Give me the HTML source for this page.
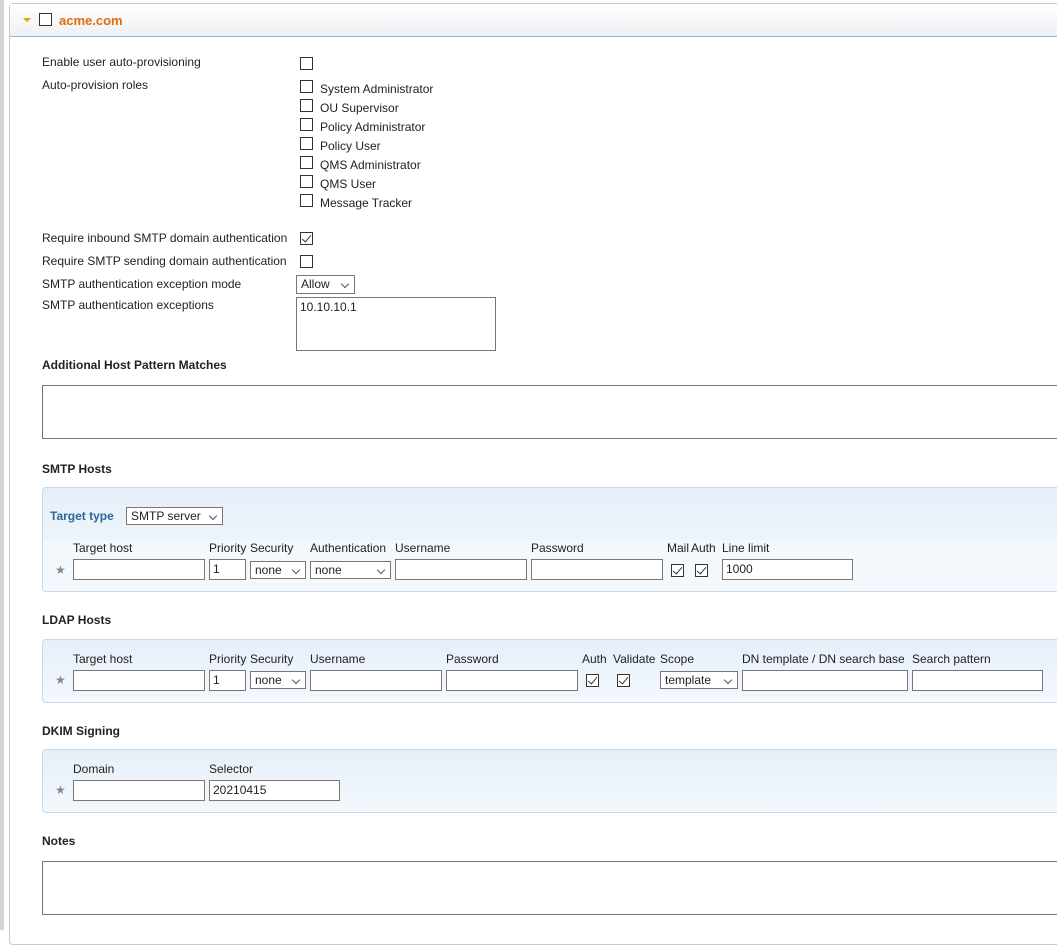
<!DOCTYPE html><html><head><style>
body{margin:0;width:1057px;height:930px;overflow:hidden;background:#fff;font-family:"Liberation Sans",Tahoma,sans-serif;font-size:12px;color:#222;position:relative}
.a{position:absolute;white-space:nowrap}
.cb{position:absolute;width:11px;height:11px;border:1px solid #333;background:#fff}
.ck::after{content:"";position:absolute;left:3px;top:0px;width:4px;height:8px;border:solid #333;border-width:0 1px 1px 0;transform:rotate(40deg)}
.in{position:absolute;height:19px;border:1px solid #777;background:#fff;box-sizing:border-box;height:21px;padding:2px 3px;font-size:12px;line-height:15px}
.sel::after{content:"";position:absolute;right:6px;top:5px;width:5px;height:5px;border:solid #555;border-width:0 1px 1px 0;transform:rotate(45deg)}
.h{position:absolute;font-weight:bold;font-size:12px}
.panel{position:absolute;left:42px;width:1030px;border:1px solid #c7d9ea;border-radius:4px;background:linear-gradient(#e6eff9,#f3f8fd)}
.star{position:absolute;color:#888;font-size:12px}
</style></head><body>
<div class="a" style="left:0;top:0;width:4px;height:930px;background:#d4d4d4"></div>
<div class="a" style="left:9px;top:3px;width:1060px;height:940px;border:1px solid #c9c9c9;border-radius:4px;"></div>
<div class="a" style="left:10px;top:4px;width:1060px;height:32px;background:linear-gradient(#fff,#eef0f3);border-bottom:1px solid #8fb8dc"></div>
<div class="a" style="left:23px;top:18px;width:0;height:0;border-left:4px solid transparent;border-right:4px solid transparent;border-top:4px solid #e8a000"></div>
<div class="cb" style="left:39px;top:13px"></div>
<div class="a" style="left:59px;top:13px;font-weight:bold;color:#e46c0a;font-size:13px">acme.com</div>

<div class="a" style="left:42px;top:55px">Enable user auto-provisioning</div>
<div class="cb" style="left:300px;top:57px"></div>
<div class="a" style="left:42px;top:78px">Auto-provision roles</div>
<div class="cb" style="left:300px;top:80px"></div><div class="a" style="left:320px;top:82px">System Administrator</div>
<div class="cb" style="left:300px;top:99px"></div><div class="a" style="left:320px;top:101px">OU Supervisor</div>
<div class="cb" style="left:300px;top:118px"></div><div class="a" style="left:320px;top:120px">Policy Administrator</div>
<div class="cb" style="left:300px;top:137px"></div><div class="a" style="left:320px;top:139px">Policy User</div>
<div class="cb" style="left:300px;top:156px"></div><div class="a" style="left:320px;top:158px">QMS Administrator</div>
<div class="cb" style="left:300px;top:175px"></div><div class="a" style="left:320px;top:177px">QMS User</div>
<div class="cb" style="left:300px;top:194px"></div><div class="a" style="left:320px;top:196px">Message Tracker</div>

<div class="a" style="left:42px;top:231px">Require inbound SMTP domain authentication</div>
<div class="cb ck" style="left:300px;top:232px"></div>
<div class="a" style="left:42px;top:254px">Require SMTP sending domain authentication</div>
<div class="cb" style="left:300px;top:255px"></div>
<div class="a" style="left:42px;top:277px">SMTP authentication exception mode</div>
<div class="in sel" style="left:296px;top:275px;width:59px;height:19px;padding:1px 4px">Allow</div>
<div class="a" style="left:42px;top:298px">SMTP authentication exceptions</div>
<div class="in" style="left:296px;top:297px;width:200px;height:54px">10.10.10.1</div>

<div class="h" style="left:42px;top:358px">Additional Host Pattern Matches</div>
<div class="in" style="left:42px;top:385px;width:1030px;height:54px"></div>

<div class="h" style="left:42px;top:462px">SMTP Hosts</div>
<div class="panel" style="top:487px;height:103px"></div>
<div class="a" style="left:43px;top:540px;width:1030px;height:50px;background:#f3f8fd"></div>
<div class="a" style="left:50px;top:509px;font-weight:bold;color:#2e6795">Target type</div>
<div class="in sel" style="left:126px;top:507px;width:97px;height:18px;padding:1px 4px">SMTP server</div>
<div class="a" style="left:73px;top:541px">Target host</div><div class="a" style="left:209px;top:541px">Priority</div><div class="a" style="left:250px;top:541px">Security</div><div class="a" style="left:310px;top:541px">Authentication</div><div class="a" style="left:395px;top:541px">Username</div><div class="a" style="left:531px;top:541px">Password</div><div class="a" style="left:667px;top:541px">Mail</div><div class="a" style="left:691px;top:541px">Auth</div><div class="a" style="left:722px;top:541px">Line limit</div>
<div class="star" style="left:55px;top:563px">★</div>
<div class="in" style="left:73px;top:559px;width:132px"></div>
<div class="in" style="left:209px;top:559px;width:37px">1</div>
<div class="in sel" style="left:250px;top:561px;width:56px;height:18px;padding:1px 4px">none</div>
<div class="in sel" style="left:310px;top:561px;width:81px;height:18px;padding:1px 4px">none</div>
<div class="in" style="left:395px;top:559px;width:132px"></div>
<div class="in" style="left:531px;top:559px;width:132px"></div>
<div class="cb ck" style="left:671px;top:564px"></div><div class="cb ck" style="left:695px;top:564px"></div>
<div class="in" style="left:722px;top:559px;width:131px">1000</div>

<div class="h" style="left:42px;top:613px">LDAP Hosts</div>
<div class="panel" style="top:639px;height:62px"></div>
<div class="a" style="left:73px;top:652px">Target host</div><div class="a" style="left:209px;top:652px">Priority</div><div class="a" style="left:250px;top:652px">Security</div><div class="a" style="left:310px;top:652px">Username</div><div class="a" style="left:446px;top:652px">Password</div><div class="a" style="left:582px;top:652px">Auth</div><div class="a" style="left:613px;top:652px">Validate</div><div class="a" style="left:660px;top:652px">Scope</div><div class="a" style="left:742px;top:652px">DN template / DN search base</div><div class="a" style="left:912px;top:652px">Search pattern</div>
<div class="star" style="left:55px;top:673px">★</div>
<div class="in" style="left:73px;top:670px;width:132px"></div>
<div class="in" style="left:209px;top:670px;width:37px">1</div>
<div class="in sel" style="left:250px;top:671px;width:56px;height:18px;padding:1px 4px">none</div>
<div class="in" style="left:310px;top:670px;width:132px"></div>
<div class="in" style="left:446px;top:670px;width:132px"></div>
<div class="cb ck" style="left:586px;top:674px"></div><div class="cb ck" style="left:617px;top:674px"></div>
<div class="in sel" style="left:660px;top:671px;width:78px;height:18px;padding:1px 4px">template</div>
<div class="in" style="left:742px;top:670px;width:166px"></div>
<div class="in" style="left:912px;top:670px;width:131px"></div>

<div class="h" style="left:42px;top:724px">DKIM Signing</div>
<div class="panel" style="top:749px;height:62px"></div>
<div class="a" style="left:73px;top:762px">Domain</div><div class="a" style="left:209px;top:762px">Selector</div>
<div class="star" style="left:55px;top:783px">★</div>
<div class="in" style="left:73px;top:780px;width:132px"></div>
<div class="in" style="left:209px;top:780px;width:131px">20210415</div>

<div class="h" style="left:42px;top:834px">Notes</div>
<div class="in" style="left:42px;top:861px;width:1030px;height:54px"></div>
</body></html>
